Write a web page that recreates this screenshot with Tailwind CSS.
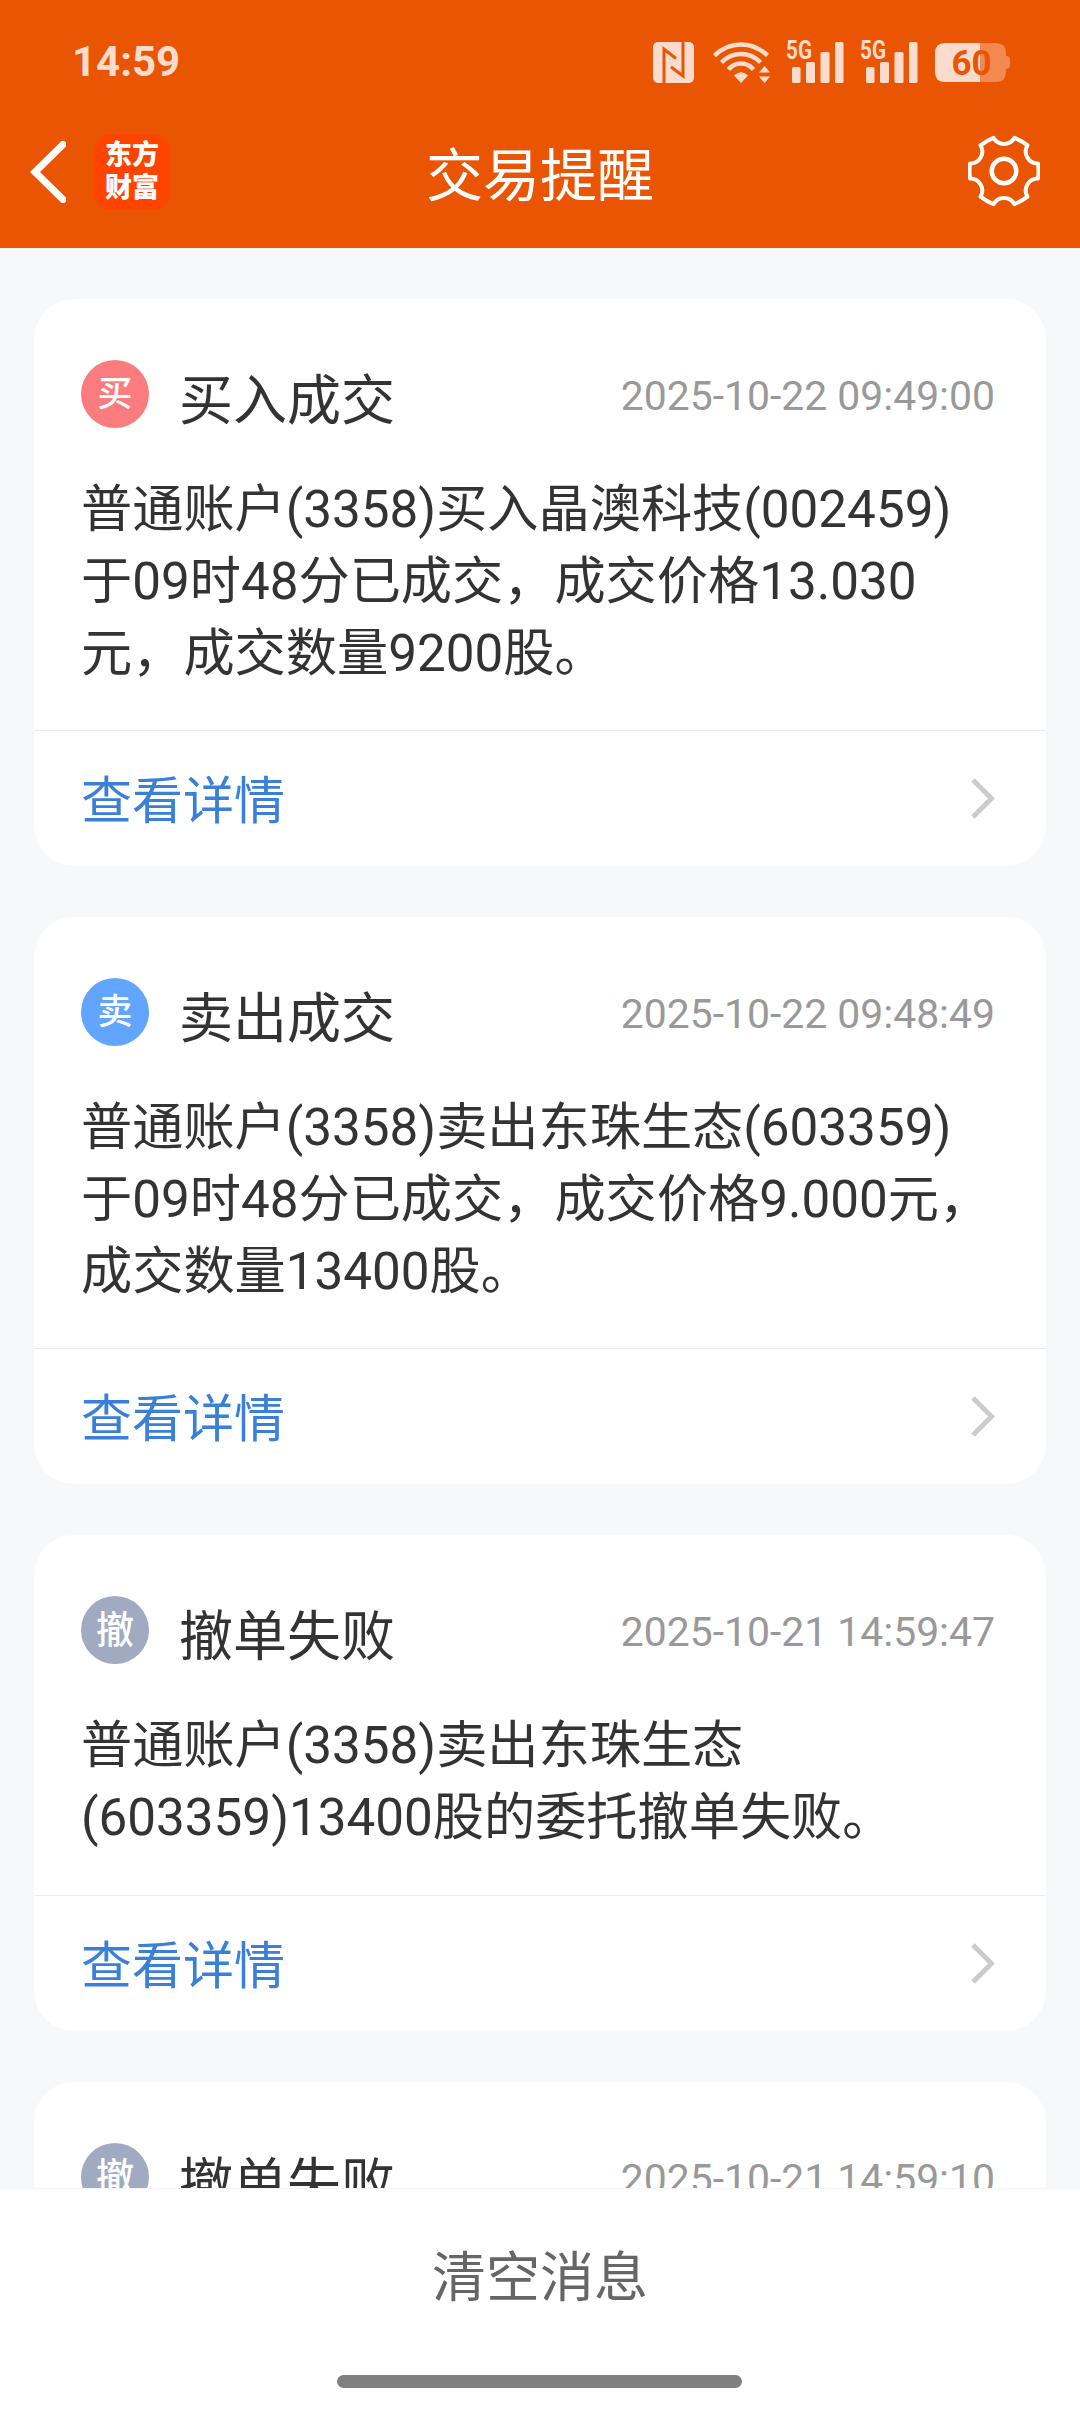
<!DOCTYPE html>
<html lang="zh-CN">
<head>
  <meta charset="UTF-8" />
  <meta name="viewport" content="width=device-width, initial-scale=1.0"/>
  <title>交易提醒</title>
  <script src="https://cdn.jsdelivr.net/npm/@tailwindcss/browser@4"></script>
</head>
<body class="bg-[#f7f8fa] font-[Roboto,'Noto_Sans_CJK_SC',sans-serif] text-[#333]">
<div class="w-[1080px] h-[2412px] flex flex-col overflow-hidden">

  <!-- Header -->
  <header class="h-[248px] shrink-0 bg-[#ea5504] text-white">
    <!-- Status bar -->
    <div class="h-[124px] flex items-center justify-between pl-[72px] pr-[70px] text-[#fbdccc]">
      <span class="text-[42px] leading-none font-bold">14:59</span>
      <div class="flex items-center">
        <!-- NFC -->
        <svg class="w-[41px] h-[41px]" viewBox="0 0 41 41">
          <rect width="41" height="41" rx="5" fill="currentColor"/>
          <path d="M11 41V7L23 16.500M30 0V34L18 25" fill="none" stroke="#ea5504" stroke-width="3"/>
        </svg>
        <!-- Wi-Fi -->
        <svg class="w-[58px] h-[41px] ml-[19px]" viewBox="0 0 58 41">
          <g fill="none" stroke="currentColor" stroke-width="4.500">
            <path d="M1.500 13.500Q13 2.500 28 2.500T54.500 13.500"/>
            <path d="M8.500 20.500Q16.500 12 28 12T47.500 20.500"/>
            <path d="M15.500 27.500Q20.500 21.500 28 21.500T40.500 27.500"/>
          </g>
          <path d="M28 41L21 33.500Q28 27 35 33.500ZM51.500 24L57 30.500H46ZM51.500 41L57 34.500H46Z" fill="currentColor"/>
        </svg>
        <!-- Signal, SIM 1 -->
        <svg class="w-[58px] h-[42px] ml-[15px] overflow-visible" viewBox="0 0 58 42" fill="currentColor">
          <text x="0" y="18" font-size="25" font-weight="700" textLength="26" lengthAdjust="spacingAndGlyphs">5G</text>
          <rect x="6" y="26" width="8.500" height="16" rx="1.500"/>
          <rect x="20" y="21" width="9" height="21" rx="1.500"/>
          <rect x="34.500" y="11" width="9" height="31" rx="1.500"/>
          <rect x="49" y="1" width="8.500" height="41" rx="1.500"/>
        </svg>
        <!-- Signal, SIM 2 -->
        <svg class="w-[58px] h-[42px] ml-[16px] overflow-visible" viewBox="0 0 58 42" fill="currentColor">
          <text x="0" y="18" font-size="25" font-weight="700" textLength="26" lengthAdjust="spacingAndGlyphs">5G</text>
          <rect x="6" y="26" width="8.500" height="16" rx="1.500"/>
          <rect x="20" y="21" width="9" height="21" rx="1.500"/>
          <rect x="34.500" y="11" width="9" height="31" rx="1.500"/>
          <rect x="49" y="1" width="8.500" height="41" rx="1.500"/>
        </svg>
        <!-- Battery -->
        <svg class="w-[75px] h-[39px] ml-[17px] overflow-visible" viewBox="0 0 75 39">
          <path d="M45 0H61Q71 0 71 10V13Q75 13 75 17V22Q75 26 71 26V29Q71 39 61 39H45Z" fill="#f38950"/>
          <path d="M45 0H10Q0 0 0 10V29Q0 39 10 39H45Z" fill="currentColor"/>
          <text x="36.500" y="32" font-size="35" font-weight="700" text-anchor="middle" fill="#ea5504">60</text>
        </svg>
      </div>
    </div>

    <!-- Title bar -->
    <div class="h-[96px] flex items-center justify-between px-[30px]">
      <div class="w-[200px] flex items-center">
        <svg class="w-[36px] h-[62px]" viewBox="0 0 36 62">
          <path d="M33 3.500L5 31L33 58.500" fill="none" stroke="#fff" stroke-width="7" stroke-linecap="round"/>
        </svg>
        <div class="w-[76px] h-[76px] ml-[28px] rounded-[18px] bg-[#ff4400] flex flex-col items-center justify-center text-[27px] leading-[33px] font-black">
          <span>东方</span>
          <span>财富</span>
        </div>
      </div>
      <h1 class="text-[57px] leading-none pt-[9px]">交易提醒</h1>
      <div class="w-[200px] flex justify-end pr-[10px] pb-[2px]">
        <svg class="w-[72px] h-[72px]" viewBox="-36 -36 72 72" fill="none" stroke="#fff" stroke-width="4" stroke-linejoin="round">
          <path d="M34 -7.500Q35 0 34 7.500A12 12 0 0 0 23.500 25.700Q17.500 30.300 10.500 33.200A12 12 0 0 0 -10.500 33.200Q-17.500 30.300 -23.500 25.700A12 12 0 0 0 -34 7.500Q-35 0 -34 -7.500A12 12 0 0 0 -23.500 -25.700Q-17.500 -30.300 -10.500 -33.200A12 12 0 0 0 10.500 -33.200Q17.500 -30.300 23.500 -25.700A12 12 0 0 0 34 -7.500Z"/>
          <circle r="12.300" stroke-width="4.500"/>
        </svg>
      </div>
    </div>
  </header>

  <!-- Message list -->
  <main class="h-[1940px] shrink-0 overflow-hidden px-[34px] pt-[51px] flex flex-col gap-[51px]">

    <!-- Buy filled -->
    <article class="shrink-0 bg-white rounded-[40px]">
      <div class="h-[175px] pt-[61px] pl-[47px] pr-[51px] flex items-start">
        <span class="w-[68px] h-[68px] rounded-full bg-[#fb7c7e] text-white text-[35px] font-medium leading-[69px] text-center">买</span>
        <h2 class="ml-[30px] text-[54px] leading-[84px]">买入成交</h2>
        <time class="ml-auto text-[40.9px] leading-[72px] text-[#999]">2025-10-22 09:49:00</time>
      </div>
      <p class="h-[256px] px-[47px] text-[51.2px] leading-[72px] whitespace-nowrap">普通账户(3358)买入晶澳科技(002459)<br>于09时48分已成交，成交价格13.030<br>元，成交数量9200股。</p>
      <a class="h-[136px] border-t border-[#ececec] pl-[47px] pr-[51px] flex items-center justify-between text-[51px] text-[#3a80d9]">
        <span class="pt-[8px]">查看详情</span>
        <svg class="w-[25px] h-[41px]" viewBox="0 0 25 41"><path d="M3 2L21.500 20.500L3 39" fill="none" stroke="#ccc" stroke-width="5"/></svg>
      </a>
    </article>

    <!-- Sell filled -->
    <article class="shrink-0 bg-white rounded-[40px]">
      <div class="h-[175px] pt-[61px] pl-[47px] pr-[51px] flex items-start">
        <span class="w-[68px] h-[68px] rounded-full bg-[#62a5ff] text-white text-[35px] font-medium leading-[69px] text-center">卖</span>
        <h2 class="ml-[30px] text-[54px] leading-[84px]">卖出成交</h2>
        <time class="ml-auto text-[40.9px] leading-[72px] text-[#999]">2025-10-22 09:48:49</time>
      </div>
      <p class="h-[256px] px-[47px] text-[51.2px] leading-[72px] whitespace-nowrap">普通账户(3358)卖出东珠生态(603359)<br>于09时48分已成交，成交价格9.000元，<br>成交数量13400股。</p>
      <a class="h-[136px] border-t border-[#ececec] pl-[47px] pr-[51px] flex items-center justify-between text-[51px] text-[#3a80d9]">
        <span class="pt-[8px]">查看详情</span>
        <svg class="w-[25px] h-[41px]" viewBox="0 0 25 41"><path d="M3 2L21.500 20.500L3 39" fill="none" stroke="#ccc" stroke-width="5"/></svg>
      </a>
    </article>

    <!-- Cancel failed -->
    <article class="shrink-0 bg-white rounded-[40px]">
      <div class="h-[175px] pt-[61px] pl-[47px] pr-[51px] flex items-start">
        <span class="w-[68px] h-[68px] rounded-full bg-[#a0aac1] text-white text-[38px] font-medium leading-[69px] text-center">撤</span>
        <h2 class="ml-[30px] text-[54px] leading-[84px]">撤单失败</h2>
        <time class="ml-auto text-[40.9px] leading-[72px] text-[#999]">2025-10-21 14:59:47</time>
      </div>
      <p class="h-[185px] px-[47px] text-[51.2px] leading-[72px] whitespace-nowrap">普通账户(3358)卖出东珠生态<br>(603359)13400股的委托撤单失败。</p>
      <a class="h-[136px] border-t border-[#ececec] pl-[47px] pr-[51px] flex items-center justify-between text-[51px] text-[#3a80d9]">
        <span class="pt-[8px]">查看详情</span>
        <svg class="w-[25px] h-[41px]" viewBox="0 0 25 41"><path d="M3 2L21.500 20.500L3 39" fill="none" stroke="#ccc" stroke-width="5"/></svg>
      </a>
    </article>

    <!-- Cancel failed, cut off by the footer -->
    <article class="shrink-0 h-[496px] bg-white rounded-[40px]">
      <div class="h-[175px] pt-[61px] pl-[47px] pr-[51px] flex items-start">
        <span class="w-[68px] h-[68px] rounded-full bg-[#a0aac1] text-white text-[38px] font-medium leading-[69px] text-center">撤</span>
        <h2 class="ml-[30px] text-[54px] leading-[84px]">撤单失败</h2>
        <time class="ml-auto text-[40.9px] leading-[72px] text-[#999]">2025-10-21 14:59:10</time>
      </div>
    </article>
  </main>

  <!-- Footer -->
  <footer class="flex-1 bg-white border-t border-[#f4f4f4] flex flex-col items-center">
    <button class="h-[172px] pt-[8px] text-[54px] leading-none text-[#666]">清空消息</button>
    <div class="w-[405px] h-[13px] mt-[14px] mr-[2px] rounded-full bg-[#808080]"></div>
  </footer>

</div>
</body>
</html>
